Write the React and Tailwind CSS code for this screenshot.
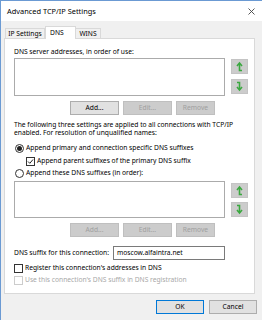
import React from 'react';

const font = { fontFamily: '"Noto Sans", "Open Sans", sans-serif' };

const Btn = ({ children, w = 'w-[49px]', disabled, isDefault }) => (
  <div
    className={`${w} h-[14px] flex items-center justify-center border text-[6.7px] leading-none ${
      isDefault
        ? 'border-[#0078d7] bg-[#e1e1e1] text-black'
        : disabled
        ? 'border-[#bfbfbf] bg-[#cccccc] text-[#a0a0a0]'
        : 'border-[#adadad] bg-[#e1e1e1] text-black'
    }`}
  >
    {children}
  </div>
);

const ArrowBtn = ({ down, className = '' }) => (
  <div className={`w-[17px] h-[15px] bg-[#cccccc] border border-[#c4c4c4] flex items-center justify-center ${className}`}>
    <svg width="9" height="11" viewBox="0 0 9 11">
      {down ? (
        <g fill="none" stroke="#3aa83f" strokeWidth="1.6">
          <path d="M2 1.5 H4.5 V8" />
          <path d="M2 6 L4.5 9 L7 6" />
        </g>
      ) : (
        <g fill="none" stroke="#3aa83f" strokeWidth="1.6">
          <path d="M4.5 3 V9.5 H7" />
          <path d="M2 5 L4.5 2 L7 5" />
        </g>
      )}
    </svg>
  </div>
);

const Radio = ({ checked, label }) => (
  <div className="flex items-center h-[10px] ml-[1px] whitespace-nowrap">
    <div className="w-[9px] h-[9px] shrink-0 rounded-full border border-[#333] bg-white flex items-center justify-center">
      {checked && <div className="w-[5px] h-[5px] rounded-full bg-[#222]" />}
    </div>
    <span className="ml-[2px]">{label}</span>
  </div>
);

const Check = ({ checked, disabled, label, className = '' }) => (
  <div className={`flex items-center h-[10px] whitespace-nowrap ${className}`}>
    <div
      className={`w-[9px] h-[9px] shrink-0 border bg-white flex items-center justify-center ${
        disabled ? 'border-[#cccccc]' : 'border-[#333]'
      }`}
    >
      {checked && (
        <svg width="7" height="7" viewBox="0 0 7 7">
          <path d="M1 3.5 L2.8 5.3 L6 1.5" fill="none" stroke="#222" strokeWidth="1" />
        </svg>
      )}
    </div>
    <span className={`ml-[2px] ${disabled ? 'text-[#a8a8a8]' : ''}`}>{label}</span>
  </div>
);

export default function App() {
  return (
    <div
      className="w-[262px] h-[320px] bg-[#f0f0f0] border-l border-t border-[#6b9ad3] flex flex-col overflow-hidden text-[6.7px] leading-[10px] text-black"
      style={font}
    >
      {/* title bar */}
      <div className="h-[20px] bg-white flex items-center justify-between pl-[6px] pr-[7px] shrink-0">
        <span className="text-[7.4px]">Advanced TCP/IP Settings</span>
        <svg width="7" height="7" viewBox="0 0 7 7">
          <path d="M0.5 0.5 L6.5 6.5 M6.5 0.5 L0.5 6.5" stroke="#444" strokeWidth="0.9" />
        </svg>
      </div>

      <div className="ml-[3px] mt-[5px] w-[251px]">
        {/* tabs */}
        <div className="flex items-end h-[12px] pl-[1px] whitespace-nowrap">
          <div className="w-[40px] h-[10px] border border-b-0 border-[#d9d9d9] bg-[#f0f0f0] flex items-center justify-center">
            IP Settings
          </div>
          <div className="w-[31px] h-[13px] -mb-[1px] relative z-10 border border-b-0 border-[#d9d9d9] bg-white flex items-start pl-[4px] pt-[1px]">
            DNS
          </div>
          <div className="w-[25px] h-[10px] border border-b-0 border-l-0 border-[#d9d9d9] bg-[#f0f0f0] flex items-center justify-center">
            WINS
          </div>
        </div>

        {/* panel */}
        <div className="h-[256px] border border-[#d9d9d9] bg-white pl-[9px] pt-[8px]">
          <div className="whitespace-nowrap">DNS server addresses, in order of use:</div>
          <div className="flex mt-[1px]">
            <div className="w-[211px] h-[38px] border border-[#ababab] bg-white" />
            <div className="ml-[6px] flex flex-col">
              <ArrowBtn className="mt-[1px]" />
              <ArrowBtn down className="mt-[5px]" />
            </div>
          </div>
          <div className="flex gap-[4px] mt-[5px] ml-[56px]">
            <Btn>Add...</Btn>
            <Btn disabled>Edit...</Btn>
            <Btn disabled w="w-[39px]">Remove</Btn>
          </div>

          <div className="mt-[6px] leading-[8px] whitespace-nowrap">
            <div>The following three settings are applied to all connections with TCP/IP</div>
            <div>enabled. For resolution of unqualified names:</div>
          </div>

          <div className="mt-[6px]">
            <Radio checked label="Append primary and connection specific DNS suffixes" />
          </div>
          <Check className="mt-[3px] ml-[12px]" checked label="Append parent suffixes of the primary DNS suffix" />
          <div className="mt-[2px]">
            <Radio label="Append these DNS suffixes (in order):" />
          </div>

          <div className="flex mt-[3px]">
            <div className="w-[211px] h-[37px] border border-[#ababab] bg-white" />
            <div className="ml-[6px] flex flex-col">
              <ArrowBtn className="mt-[2px]" />
              <ArrowBtn down className="mt-[4px]" />
            </div>
          </div>
          <div className="flex gap-[4px] mt-[5px] ml-[56px]">
            <Btn disabled>Add...</Btn>
            <Btn disabled>Edit...</Btn>
            <Btn disabled w="w-[39px]">Remove</Btn>
          </div>

          <div className="flex items-center mt-[9px]">
            <span className="w-[99px] whitespace-nowrap">DNS suffix for this connection:</span>
            <div className="w-[112px] h-[14px] border border-[#7a7a7a] bg-white flex items-center pl-[3px]">
              moscow.alfaintra.net
            </div>
          </div>

          <Check className="mt-[3px]" label="Register this connection's addresses in DNS" />
          <Check className="mt-[2px]" disabled label="Use this connection's DNS suffix in DNS registration" />
        </div>
      </div>

      {/* footer */}
      <div className="flex gap-[5px] mt-[6px] ml-[155px]">
        <Btn isDefault w="w-[48px]">OK</Btn>
        <Btn w="w-[48px]">Cancel</Btn>
      </div>
    </div>
  );
}
